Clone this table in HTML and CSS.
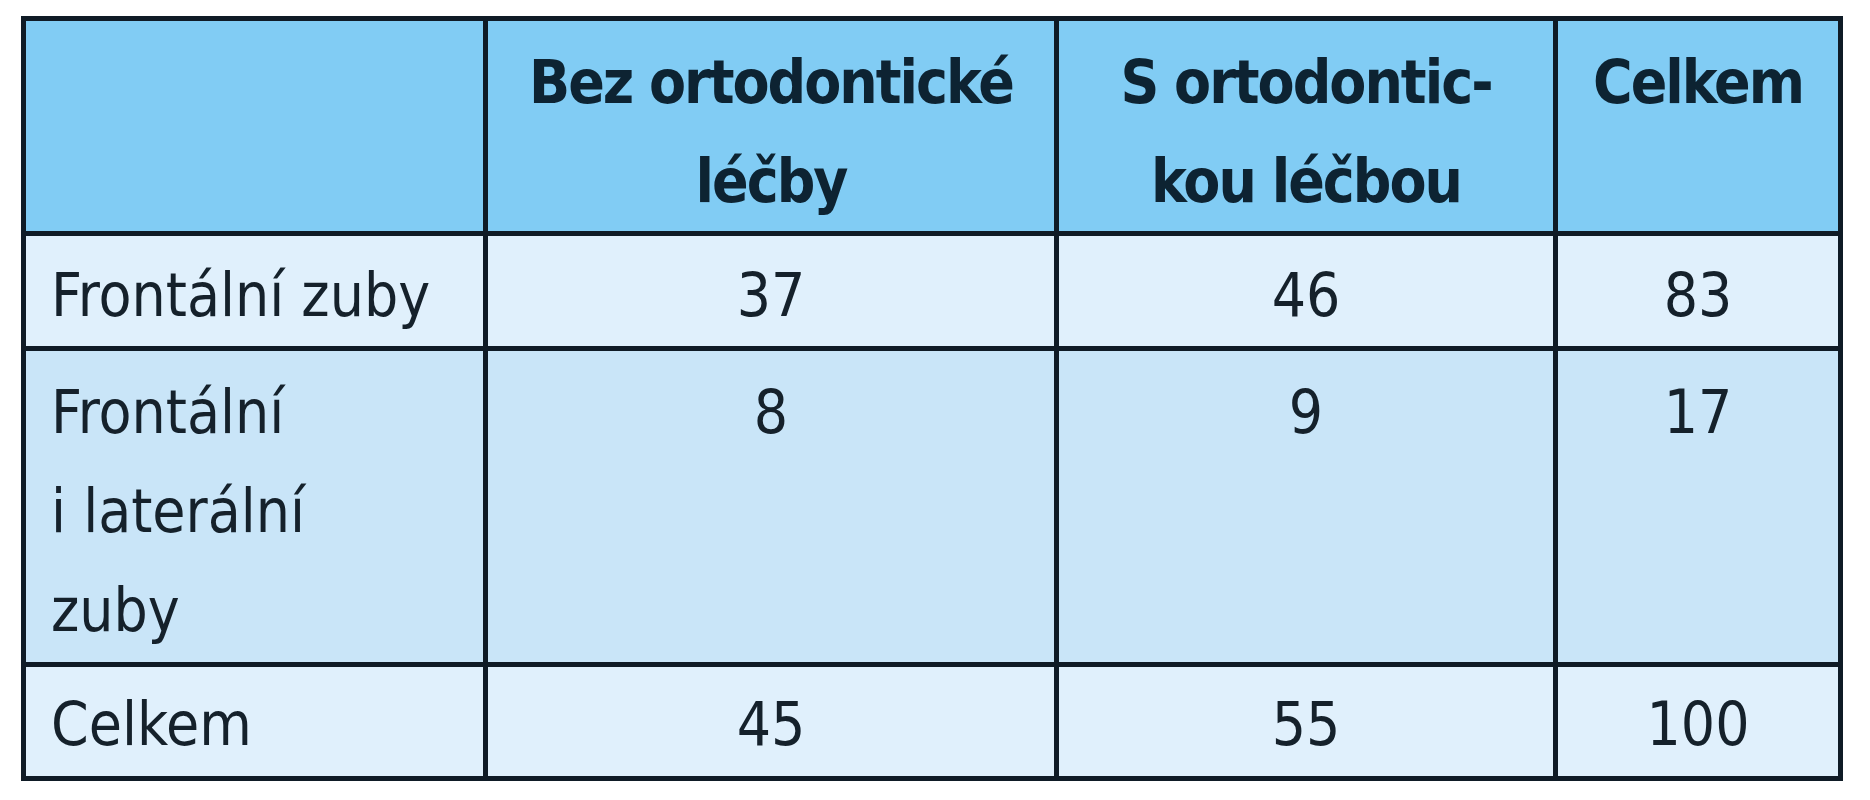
FILE: index.html
```html
<!DOCTYPE html>
<html lang="cs">
<head>
<meta charset="utf-8">
<title>Tabulka</title>
<link rel="stylesheet" href="styles.css">
</head>
<body>
<table class="data">
  <colgroup>
    <col class="c1">
    <col class="c2">
    <col class="c3">
    <col class="c4">
  </colgroup>
  <thead>
    <tr class="head">
      <th></th>
      <th>Bez ortodontické<br>léčby</th>
      <th>S ortodontic-<br>kou léčbou</th>
      <th>Celkem</th>
    </tr>
  </thead>
  <tbody>
    <tr class="r1">
      <td class="label">Frontální zuby</td>
      <td>37</td>
      <td>46</td>
      <td>83</td>
    </tr>
    <tr class="r2">
      <td class="label">Frontální<br>i laterální<br>zuby</td>
      <td>8</td>
      <td>9</td>
      <td>17</td>
    </tr>
    <tr class="r3">
      <td class="label">Celkem</td>
      <td>45</td>
      <td>55</td>
      <td>100</td>
    </tr>
  </tbody>
</table>
</body>
</html>
```

FILE: styles.css
```css
html, body {
  margin: 0;
  padding: 0;
  background: #ffffff;
}

body {
  padding: 16px 0 0 21px;
}

.data {
  border-collapse: collapse;
  width: 1822px;
  table-layout: fixed;
  font-family: "DejaVu Sans Condensed", "Liberation Sans Narrow", "DejaVu Sans", sans-serif;
  color: #15212b;
}

.c1 { width: 462px; }
.c2 { width: 571px; }
.c3 { width: 499px; }
.c4 { width: 285px; }

.data th,
.data td {
  border: 5px solid #0f1b26;
  vertical-align: top;
  text-align: center;
  padding: 0;
}

.data th {
  background: #81ccf4;
  color: #0d2332;
  font-weight: bold;
  font-size: 60px;
  line-height: 99px;
  letter-spacing: -2px;
  padding-top: 12px;
}

.head { height: 212px; }

.data td {
  font-size: 60px;
  line-height: 99px;
  font-weight: normal;
}

.data td.label {
  text-align: left;
  padding-left: 25px;
}

.r1 td, .r3 td { background: #e0f0fc; }
.r2 td { background: #c9e5f8; }

.r1 td { padding-top: 10px; }
.r2 td { padding-top: 12px; }
.r3 td { padding-top: 8px; }

.r1 { height: 115px; }
.r2 { height: 316px; }
.r3 { height: 114px; }
```
